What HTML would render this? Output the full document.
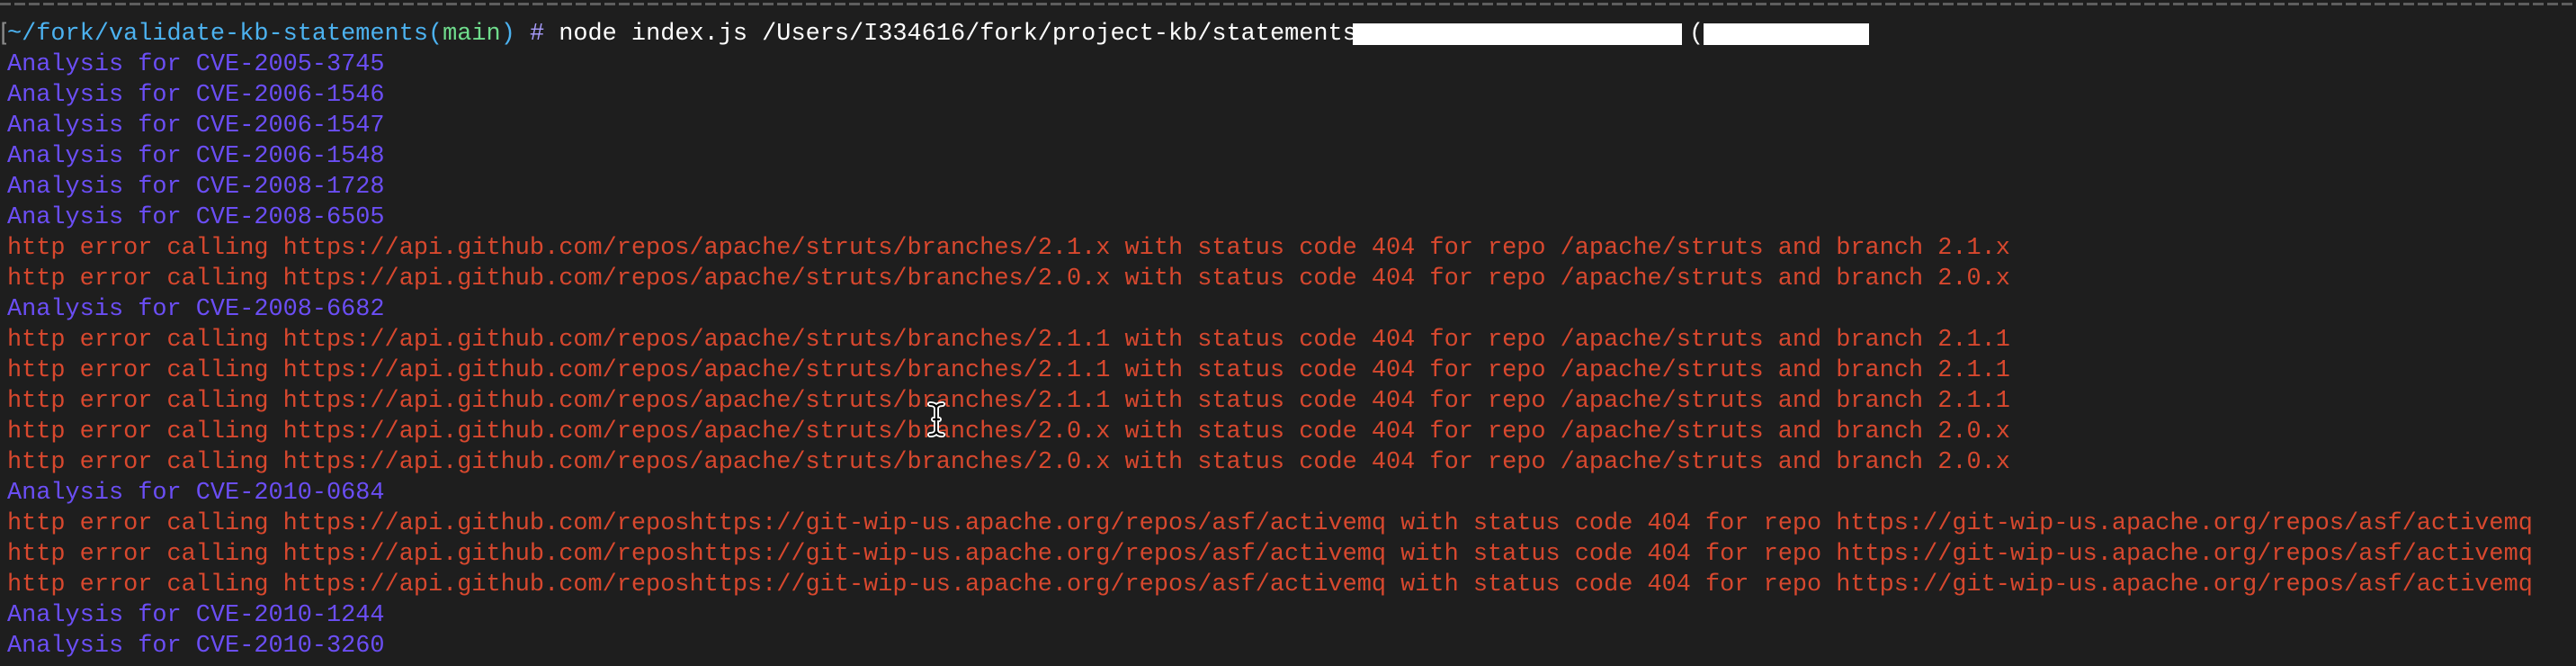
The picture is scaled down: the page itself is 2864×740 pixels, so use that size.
<!DOCTYPE html>
<html><head><meta charset="utf-8"><style>
html,body{margin:0;padding:0;background:#1e1e1e;width:2864px;height:740px;overflow:hidden}
.dash{position:absolute;left:0;top:3px;width:2864px;height:3px;background:repeating-linear-gradient(90deg,#5e5e5e 0 12px,transparent 12px 16px)}
.t{position:absolute;left:8px;top:21px;font-family:"Liberation Mono",monospace;font-size:26.9px;line-height:34px;white-space:pre;color:#fff}
.p{color:#6b4ef5}.r{color:#d8482e}.b{color:#4cb2f0}.g{color:#6fdc8c}.h{color:#a99dff}
.br{position:absolute;left:-3px;top:21px;font-family:"Liberation Mono",monospace;font-size:26.9px;line-height:34px;color:#8a8a8a;width:10px;overflow:hidden}
.box{position:absolute;background:#fff}
</style></head><body>
<div class="dash"></div>
<div class="br">[</div>
<div class="t"><span class="b">~/fork/validate-kb-statements(</span><span class="g">main</span><span class="b">)</span> <span class="h">#</span> node index.js /Users/I334616/fork/project-kb/statements
<span class="p">Analysis for CVE-2005-3745
Analysis for CVE-2006-1546
Analysis for CVE-2006-1547
Analysis for CVE-2006-1548
Analysis for CVE-2008-1728
Analysis for CVE-2008-6505</span>
<span class="r">http error calling https://api.github.com/repos/apache/struts/branches/2.1.x with status code 404 for repo /apache/struts and branch 2.1.x
http error calling https://api.github.com/repos/apache/struts/branches/2.0.x with status code 404 for repo /apache/struts and branch 2.0.x</span>
<span class="p">Analysis for CVE-2008-6682</span>
<span class="r">http error calling https://api.github.com/repos/apache/struts/branches/2.1.1 with status code 404 for repo /apache/struts and branch 2.1.1
http error calling https://api.github.com/repos/apache/struts/branches/2.1.1 with status code 404 for repo /apache/struts and branch 2.1.1
http error calling https://api.github.com/repos/apache/struts/branches/2.1.1 with status code 404 for repo /apache/struts and branch 2.1.1
http error calling https://api.github.com/repos/apache/struts/branches/2.0.x with status code 404 for repo /apache/struts and branch 2.0.x
http error calling https://api.github.com/repos/apache/struts/branches/2.0.x with status code 404 for repo /apache/struts and branch 2.0.x</span>
<span class="p">Analysis for CVE-2010-0684</span>
<span class="r">http error calling https://api.github.com/reposhttps://git-wip-us.apache.org/repos/asf/activemq with status code 404 for repo https://git-wip-us.apache.org/repos/asf/activemq
http error calling https://api.github.com/reposhttps://git-wip-us.apache.org/repos/asf/activemq with status code 404 for repo https://git-wip-us.apache.org/repos/asf/activemq
http error calling https://api.github.com/reposhttps://git-wip-us.apache.org/repos/asf/activemq with status code 404 for repo https://git-wip-us.apache.org/repos/asf/activemq</span>
<span class="p">Analysis for CVE-2010-1244
Analysis for CVE-2010-3260</span></div>
<div class="box" style="left:1504px;top:26px;width:366px;height:24px"></div>
<div style="position:absolute;left:1878px;top:21px;font-family:'Liberation Mono',monospace;font-size:26.9px;line-height:34px;color:#fff">(</div>
<div class="box" style="left:1894px;top:26px;width:184px;height:24px"></div>
<svg style="position:absolute;left:1031px;top:446px" width="20" height="40" viewBox="0 0 20 40">
<path d="M3 3 Q10 3 10 8 L10 32 Q10 37 3 37 M17 3 Q10 3 10 8 M10 32 Q10 37 17 37 M7 20 H13" fill="none" stroke="#fff" stroke-width="6" stroke-linecap="round"/>
<path d="M3 3 Q10 3 10 8 L10 32 Q10 37 3 37 M17 3 Q10 3 10 8 M10 32 Q10 37 17 37 M7 20 H13" fill="none" stroke="#000" stroke-width="2.2" stroke-linecap="round"/>
</svg>
</body></html>
